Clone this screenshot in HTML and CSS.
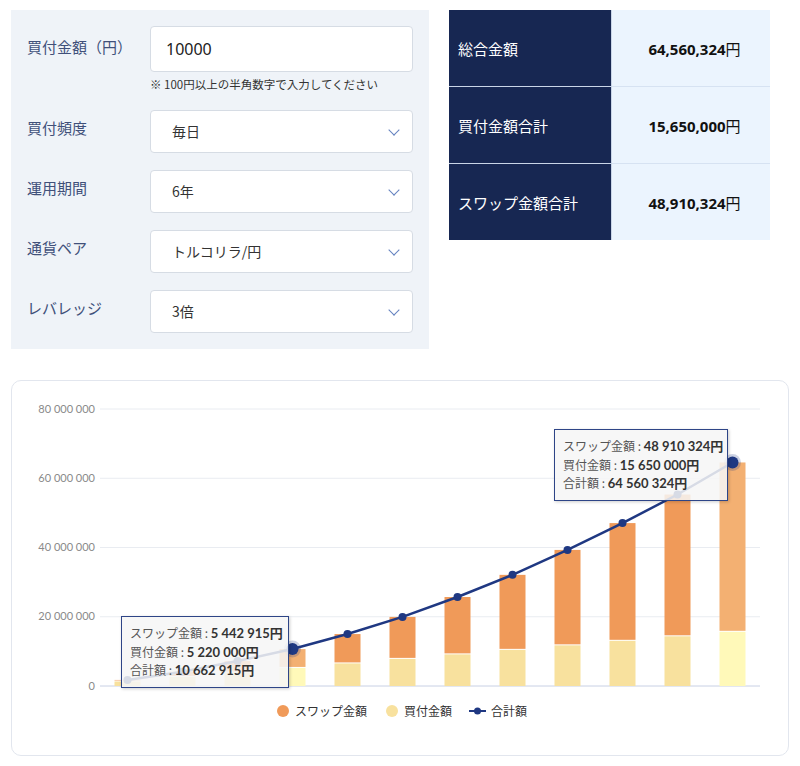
FILE: index.html
```html
<!DOCTYPE html>
<html lang="ja">
<head>
    <meta charset="UTF-8">
    <meta name="viewport" content="width=device-width, initial-scale=1.0">
    <title>積立シミュレーション</title>
    <link rel="stylesheet" href="styles.css">
</head>
<body>

<div class="top">
    <div class="form-panel">
        <div class="row">
            <label class="row-label" for="amount">買付金額（円）</label>
            <div class="row-field">
                <input type="text" id="amount" class="text-input" value="10000">
                <p class="note">※ 100円以上の半角数字で入力してください</p>
            </div>
        </div>
        <div class="row">
            <label class="row-label">買付頻度</label>
            <div class="row-field"><div class="select">毎日<span class="chev"></span></div></div>
        </div>
        <div class="row">
            <label class="row-label">運用期間</label>
            <div class="row-field"><div class="select">6年<span class="chev"></span></div></div>
        </div>
        <div class="row">
            <label class="row-label">通貨ペア</label>
            <div class="row-field"><div class="select">トルコリラ/円<span class="chev"></span></div></div>
        </div>
        <div class="row">
            <label class="row-label">レバレッジ</label>
            <div class="row-field"><div class="select">3倍<span class="chev"></span></div></div>
        </div>
    </div>

    <table class="result">
        <tr><th>総合金額</th><td>64,560,324<span class="yen">円</span></td></tr>
        <tr><th>買付金額合計</th><td>15,650,000<span class="yen">円</span></td></tr>
        <tr><th>スワップ金額合計</th><td>48,910,324<span class="yen">円</span></td></tr>
    </table>
</div>

<div class="chart-card">
    <svg id="chart" class="chart" viewBox="12 381 776 374" width="776" height="374"></svg>

    <div class="tip tip-one">
        <div>スワップ金額 : <b>5 442 915円</b></div>
        <div>買付金額 : <b>5 220 000円</b></div>
        <div>合計額 : <b>10 662 915円</b></div>
    </div>
    <div class="tip tip-two">
        <div>スワップ金額 : <b>48 910 324円</b></div>
        <div>買付金額 : <b>15 650 000円</b></div>
        <div>合計額 : <b>64 560 324円</b></div>
    </div>
</div>

<script>
    const invest = [1310000, 2610000, 3910000, 5220000, 6520000, 7830000, 9130000, 10440000, 11740000, 13050000, 14350000, 15650000];
    const total = [1750000, 4100000, 7200000, 10662915, 15000000, 19950000, 25700000, 32100000, 39300000, 47050000, 55300000, 64560324];
    const hovered = [3, 11];

    const svg = document.getElementById("chart");
    const base = 686;
    const yOf = v => base - v / 80000000 * 277;
    const xOf = i => 127.5 + i * 55;
    let out = "";

    // grid and axis labels
    for (let k = 0; k <= 4; k++) {
        const y = base - k * 69.25;
        const color = k === 0 ? "#c8d0e4" : "#e9ecf1";
        out += `<line x1="100" x2="760" y1="${y}" y2="${y}" stroke="${color}" stroke-width="1"/>`;
        const label = k === 0 ? "0" : (k * 20) + " 000 000";
        out += `<text x="95" y="${y + 3.5}" class="axis" text-anchor="end">${label}</text>`;
    }

    // stacked bars
    invest.forEach((v, i) => {
        const hot = hovered.includes(i);
        const x = xOf(i) - 13;
        const yi = yOf(v);
        const yt = yOf(total[i]);
        out += `<rect x="${x}" y="${yi}" width="26" height="${base - yi}" fill="${hot ? '#fff9b9' : '#f8e19e'}"/>`;
        out += `<rect x="${x}" y="${yt}" width="26" height="${yi - yt - 1}" fill="${hot ? '#f3b072' : '#f09a59'}"/>`;
    });

    // total line
    const pts = total.map((v, i) => xOf(i) + "," + yOf(v)).join(" ");
    out += `<polyline points="${pts}" fill="none" stroke="#1f3882" stroke-width="2.5"/>`;
    total.forEach((v, i) => {
        if (hovered.includes(i)) {
            out += `<circle cx="${xOf(i)}" cy="${yOf(v)}" r="8.5" fill="#1f3882" fill-opacity="0.22"/>`;
            out += `<circle cx="${xOf(i)}" cy="${yOf(v)}" r="6" fill="#1f3882"/>`;
        } else {
            out += `<circle cx="${xOf(i)}" cy="${yOf(v)}" r="4" fill="#1f3882"/>`;
        }
    });

    // legend
    out += `<circle cx="283" cy="711" r="6" fill="#f09a59"/>`;
    out += `<text x="295" y="715.5" class="legend">スワップ金額</text>`;
    out += `<circle cx="392" cy="711" r="6" fill="#f8e19e"/>`;
    out += `<text x="404" y="715.5" class="legend">買付金額</text>`;
    out += `<line x1="469" x2="486" y1="711" y2="711" stroke="#1f3882" stroke-width="2"/>`;
    out += `<circle cx="477.5" cy="711" r="3.5" fill="#1f3882"/>`;
    out += `<text x="491" y="715.5" class="legend">合計額</text>`;

    svg.innerHTML = out;
</script>

</body>
</html>
```

FILE: styles.css
```css
body {
    margin: 0;
    background-color: white;
    font-family: "Noto Sans", "Noto Sans CJK JP", sans-serif;
    color: #333;
}
.top {
    display: flex;
    align-items: flex-start;
    gap: 20px;
    padding: 10px 11px 0;
}
.form-panel {
    width: 418px;
    box-sizing: border-box;
    background-color: #eff3f8;
    padding: 16px 16px 16px 16px;
    display: flex;
    flex-direction: column;
    gap: 17px;
}
.row {
    display: flex;
    align-items: flex-start;
}
.row-label {
    width: 123px;
    flex-shrink: 0;
    padding-top: 7px;
    font-family: "Noto Sans CJK JP", sans-serif;
    font-size: 15px;
    line-height: 22px;
    color: #40507a;
}
.row:first-child .row-label {
    padding-top: 10px;
}
.row-field {
    flex: 1;
}
.text-input {
    display: block;
    width: 100%;
    height: 46px;
    box-sizing: border-box;
    border: 1px solid #d6dce4;
    border-radius: 4px;
    padding: 0 15px;
    font-family: "Noto Sans", sans-serif;
    font-size: 16px;
    color: #222;
    background: white;
}
.note {
    margin: 4px 0 0;
    font-family: "Noto Sans CJK JP", sans-serif;
    font-size: 11.5px;
    line-height: 17px;
    color: #333;
}
.select {
    position: relative;
    height: 43px;
    box-sizing: border-box;
    border: 1px solid #d6dce4;
    border-radius: 4px;
    background: white;
    padding-left: 21px;
    font-family: "Noto Sans CJK JP", sans-serif;
    font-size: 14px;
    line-height: 41px;
    color: #333;
}
.chev {
    position: absolute;
    right: 14px;
    top: 15px;
    width: 7px;
    height: 7px;
    border-right: 1.3px solid #6482bf;
    border-bottom: 1.3px solid #6482bf;
    transform: rotate(45deg);
}
.result {
    width: 321px;
    border-collapse: collapse;
}
.result th {
    width: 153px;
    height: 76px;
    background-color: #172752;
    color: white;
    font-family: "Noto Sans CJK JP", sans-serif;
    font-size: 15px;
    font-weight: normal;
    text-align: left;
    padding: 0 0 0 9px;
    border-bottom: 1px solid #c9d5e8;
    border-right: 1px solid #c9d5e8;
}
.result td {
    background-color: #ebf4fe;
    text-align: center;
    font-size: 15px;
    font-weight: bold;
    color: #111;
    padding-left: 8px;
    border-bottom: 1px solid #d6e2f2;
}
.result tr:last-child th,
.result tr:last-child td {
    border-bottom: none;
}
.yen {
    font-family: "Noto Sans CJK JP", sans-serif;
    font-weight: normal;
}
.chart-card {
    position: relative;
    width: 778px;
    height: 376px;
    box-sizing: border-box;
    margin: 31px 0 0 11px;
    border: 1px solid #e2e6ee;
    border-radius: 10px;
}
.chart {
    display: block;
}
.axis {
    font-family: Lato, sans-serif;
    font-size: 11px;
    fill: #8a8a8a;
}
.legend {
    font-family: "Noto Sans CJK JP", sans-serif;
    font-size: 12px;
    fill: #333;
}
.tip {
    position: absolute;
    box-sizing: border-box;
    padding: 7px 8px;
    background-color: rgba(246, 246, 246, 0.86);
    border: 1px solid #2e4587;
    box-shadow: 1px 1px 3px rgba(0, 0, 0, 0.2);
    font-family: "Noto Sans CJK JP", sans-serif;
    font-size: 12px;
    line-height: 17.5px;
    color: #555;
    white-space: nowrap;
}
.tip b {
    color: #333;
    font-family: Lato, "Noto Sans CJK JP", sans-serif;
    font-size: 13px;
}
.tip-one {
    left: 109px;
    top: 235px;
    width: 168px;
}
.tip-two {
    left: 542px;
    top: 48px;
    width: 174px;
}
```
